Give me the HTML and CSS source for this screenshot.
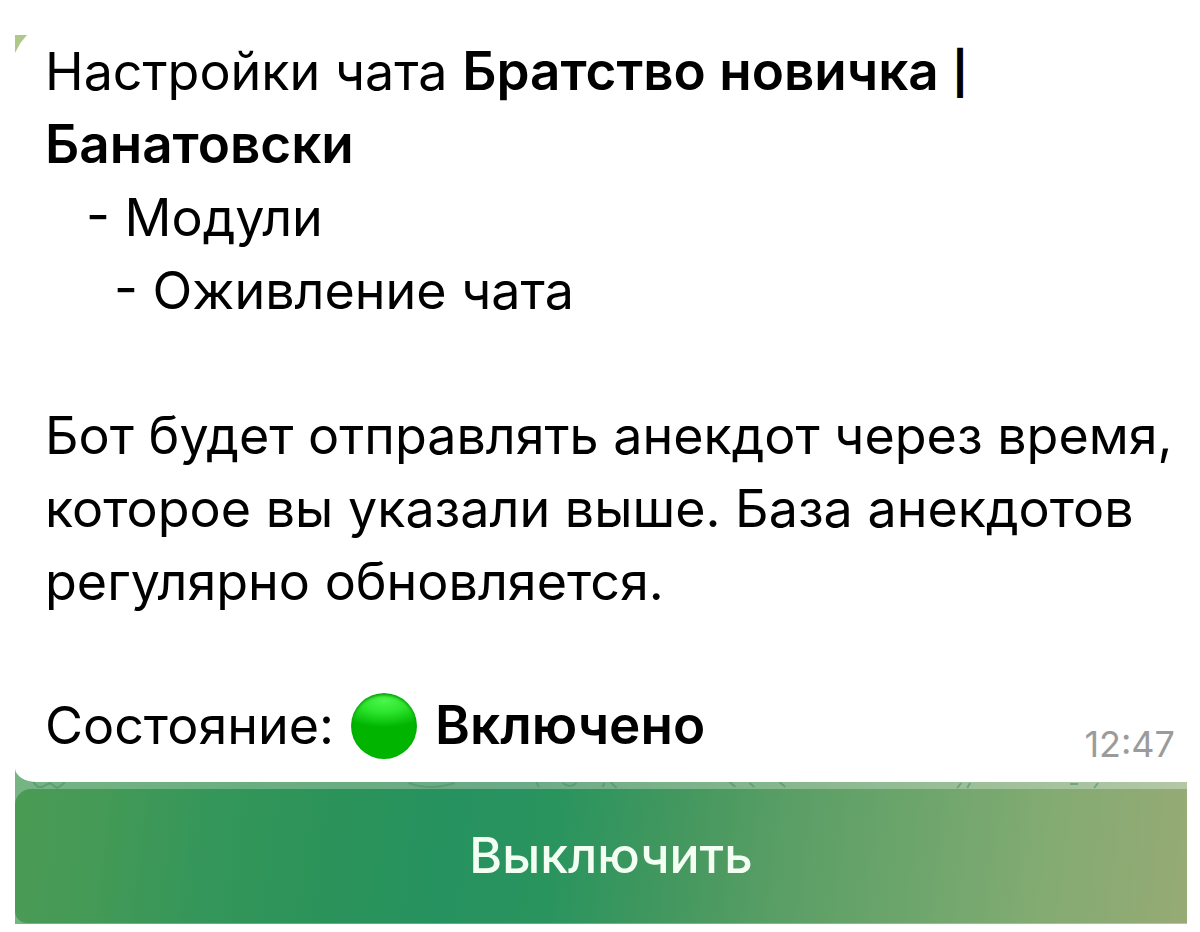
FILE: index.html
```
<!DOCTYPE html>
<html lang="ru">
<head>
<meta charset="utf-8">
<meta name="viewport" content="width=device-width, initial-scale=1">
<title>Настройки чата</title>
<link rel="stylesheet" href="styles.css">
</head>
<body>
<main class="chat">
  <article class="message">
    <p>Настройки чата <strong>Братство новичка <span class="bar">|</span></strong> <strong>Банатовски</strong></p>
    <p class="level-one">- Модули</p>
    <p class="level-two">- Оживление чата</p>
    <p class="block">Бот будет отправлять анекдот через время, которое вы указали выше. База анекдотов регулярно обновляется.</p>
    <footer class="status">
      <p class="state"><span>Состояние:</span><span class="dot"></span><strong>Включено</strong></p>
      <time class="time">12:47</time>
    </footer>
  </article>
  <svg class="pattern" viewBox="0 0 1173 7" preserveAspectRatio="none" aria-hidden="true">
    <path d="M18 0l5 5h4l8-4 7 5 5-3 3-3M394 1q21 8 46 0M522 0l2 5M548 1q8 6 14 0M588 5l2-4M596 0l6 6M715 0l6 5M735 1l5 4M765 0l6 5M943 6l4-5M953 6l3-5M1056 2h8M1080 6l4-5"/>
  </svg>
  <button class="toggle" type="button">Выключить</button>
</main>
</body>
</html>
```
FILE: styles.css
```
* { box-sizing: border-box; }
body {
  margin: 0;
  background: #fff;
  color: #000;
  font-family: Inter, "Liberation Sans", sans-serif;
  font-size: 52px;
  line-height: 73px;
}
p { margin: 0; }
strong { font-size: 53px; font-weight: 600; line-height: 1; }
.chat {
  margin: 35px 13px 8px 15px;
  padding-bottom: 1px;
  background: linear-gradient(90deg, #76b483 0%, #6aae80 20%, #6aaa86 42%, #86b78c 65%, #b3c8a4 100%);
}
.message {
  position: relative;
  background: #fff;
  border-bottom-left-radius: 22px 14px;
  padding: 0 12px 20px 30px;
}
.message::before {
  content: "";
  position: absolute;
  top: 0;
  left: 0;
  width: 12px;
  height: 18px;
  background: #b0c78a;
  clip-path: polygon(0 0, 100% 0, 45% 45%, 0 100%);
}
.bar { font-size: 42px; font-weight: 700; vertical-align: 2px; line-height: 1; }
.level-one { padding-left: 41px; }
.level-two { padding-left: 69px; }
.block { margin: 72px 0 71px; }
.status { display: flex; justify-content: space-between; align-items: flex-end; }
.state { display: flex; align-items: center; }
.dot {
  width: 66px;
  height: 66px;
  margin: 0 18px 0 17px;
  border-radius: 50%;
  background: radial-gradient(ellipse 80% 40% at 50% 12%, #4af64a 0%, #2ce42c 45%, rgba(0, 181, 0, 0) 100%), #00b400;
  box-shadow: inset 0 2px 3px #0b9a0b;
}
.time { font-size: 36px; line-height: 36px; color: #9b9b9b; }
.pattern {
  display: block;
  width: 100%;
  height: 7px;
  fill: none;
  stroke: #4f936a;
  stroke-width: 2;
  opacity: .6;
}
.toggle {
  display: block;
  width: 100%;
  padding: 30px 12px 31px 32px;
  border: 0;
  border-radius: 16px 0 0 12px;
  background: linear-gradient(97deg, #4a9b54 0%, #459a56 7%, #34965a 17%, #2b9359 27%, #26925f 37%, #2a945e 46%, #45985f 57%, #5b9f66 66%, #6ca56c 76%, #82ab72 87%, #97aa75 100%);
  color: #f4fff4;
  font: inherit;
  font-size: 50px;
  font-weight: 500;
}
```
